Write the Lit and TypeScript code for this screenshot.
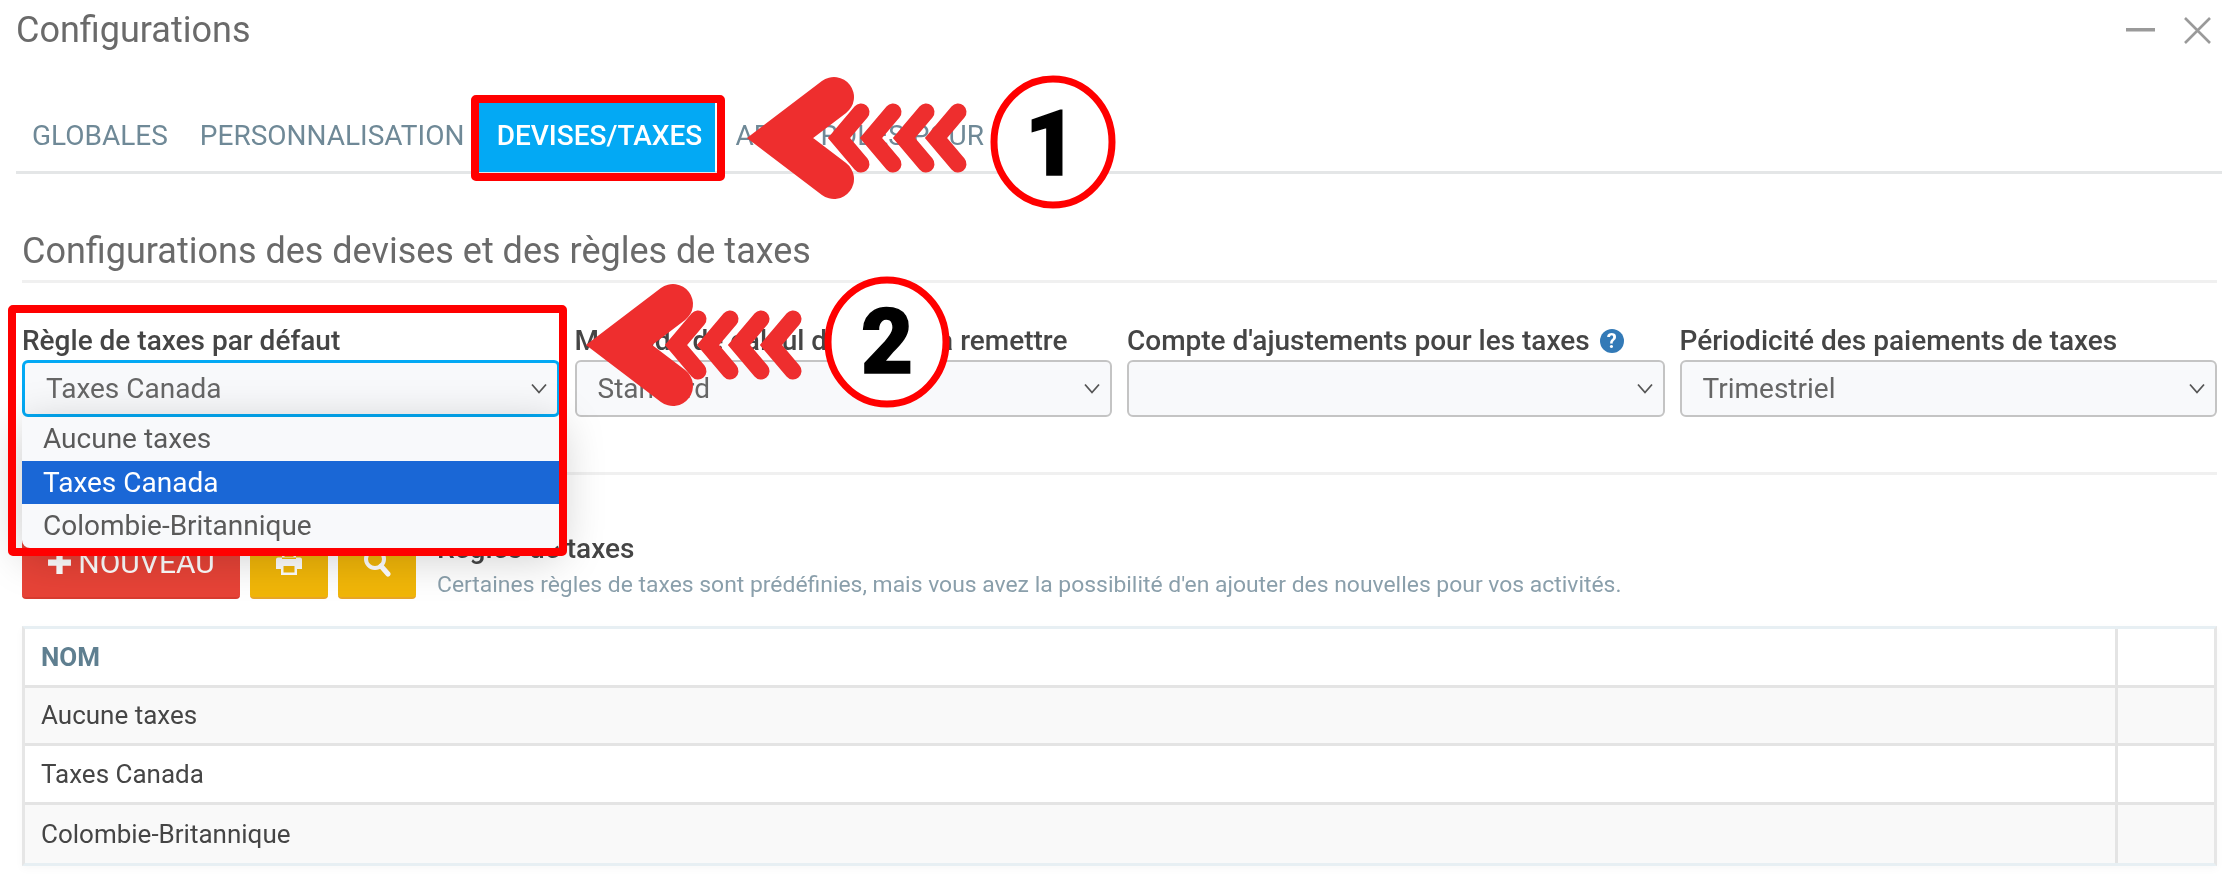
import { LitElement, html, css, svg } from "lit";
import { customElement } from "lit/decorators.js";

const chevron = html`<svg class="chev" viewBox="0 0 18 11" aria-hidden="true"><path d="M2 1.5 9 9.5 16 1.5" fill="none" stroke="#555" stroke-width="1.8"/></svg>`;

function arrow(tipY: number, big: number, smalls: number[]) {
  const bigV = big + 32;
  const small = smalls.map((t) => {
    const v = t + 11;
    return svg`<path class="soft" d="M${v + 22} ${tipY - 26} L${v} ${tipY} L${v + 22} ${tipY + 26}" fill="none" stroke="#ee2e2e" stroke-width="17" stroke-linecap="round" stroke-linejoin="miter"/>`;
  });
  return svg`${small}<path d="M${bigV + 54} ${tipY - 41} L${bigV} ${tipY} L${bigV + 54} ${tipY + 41}" fill="none" stroke="#ee2e2e" stroke-width="40" stroke-linecap="round" stroke-linejoin="miter"/>`;
}

@customElement("app-root")
export class AppRoot extends LitElement {
  static styles = css`
    :host {
      display: block;
      position: relative;
      width: 2225px;
      height: 876px;
      overflow: hidden;
      background: #fff;
      font-family: Roboto, "Liberation Sans", sans-serif;
      color: #444;
    }
    .page { filter: blur(0.45px); height: 876px; }
    .top {
      display: flex;
      align-items: center;
      justify-content: space-between;
      height: 60px;
      padding: 0 14px 0 16px;
    }
    .title { font-size: 36px; color: #6a6a6a; }
    .winbtns { display: flex; align-items: center; gap: 29px; }
    .winbtns svg { display: block; }
    .tabs {
      display: flex;
      align-items: stretch;
      height: 114px;
      margin: 0 3px 0 16px;
      padding-top: 43px;
      box-sizing: border-box;
      border-bottom: 3px solid #e4e6e7;
      font-size: 28px;
      color: #6f8997;
    }
    .tab { display: flex; align-items: center; padding: 0 16px 5px; height: 69px; box-sizing: border-box; white-space: nowrap; }
    .tab.active { background: #03a9f4; color: #fff; font-weight: 500; margin: 0 4px 0 0; padding: 0 0 5px 4px; width: 236px; justify-content: center; }
    .tab.pers { padding-right: 15px; }
    .content { padding: 0 8px 0 22px; }
    h2 {
      margin: 0;
      height: 109px;
      box-sizing: border-box;
      padding-top: 55px;
      font-size: 36px;
      font-weight: 400;
      line-height: 44px;
      color: #6a6a6a;
      border-bottom: 3px solid #f0f0f0;
    }
    .fields {
      display: grid;
      grid-template-columns: repeat(4, 1fr);
      gap: 15px;
      margin-top: 39px;
      height: 150px;
      position: relative;
    }
    .field { position: relative; }
    .lbl {
      font-size: 28px;
      font-weight: 500;
      color: #454545;
      line-height: 36px;
      height: 38px;
      white-space: nowrap;
      display: flex;
      align-items: center;
      gap: 10px;
    }
    .sel {
      height: 56.5px;
      box-sizing: border-box;
      border: 2.5px solid #c4c4c4;
      border-radius: 6px;
      background: #f8f9fb;
      font-size: 28px;
      color: #666;
      display: flex;
      align-items: center;
      justify-content: space-between;
      padding: 0 9px 0 21px;
    }
    .sel.focus { border: 3.5px solid #03a9f4; }
    .chev { width: 18px; height: 11px; flex: none; }
    .help {
      width: 24px; height: 24px; border-radius: 50%;
      background: #337ab7; color: #fff;
      font-size: 20px; font-weight: 700;
      display: inline-flex; align-items: center; justify-content: center;
    }
    .menu {
      position: absolute;
      left: 0;
      top: 95px;
      width: 538px;
      height: 131px;
      background: #f8f9fb;
      border-radius: 0 0 8px 8px;
      box-shadow: 0 8px 45px rgba(0,0,0,.22);
      font-size: 28px;
      color: #5a5a5a;
      z-index: 2;
    }
    .opt { height: 43.6px; display: flex; align-items: center; padding-left: 21px; }
    .opt.on { background: #1a67d6; color: #fff; }
    .bar { display: flex; gap: 10px; align-items: flex-end; height: 127px; border-top: 3px solid #f0f0f0; box-sizing: border-box; }
    .btn {
      height: 72px; box-sizing: border-box; border-radius: 4px;
      display: flex; align-items: center; justify-content: center;
      color: #fff;
    }
    .btn.red { width: 218px; background: #e74337; border-bottom: 2px solid #d83c30; font-size: 30px; gap: 6px; }
    .btn.yel { width: 78px; background: #f1b608; border-bottom: 2px solid #e8a628; }
    .desc { margin: 0 0 -4px 11px; display: flex; flex-direction: column; height: 72px; }
    .desc b { font-size: 28px; font-weight: 500; color: #454545; line-height: 36px; }
    .desc span { font-size: 22.9px; color: #8a9fab; line-height: 36px; white-space: nowrap; }
    .table {
      margin-top: 27px;
      display: grid;
      grid-template-columns: 1fr 99px;
      border: 3px solid #e6e6e6;
      border-top-color: #e7eff3;
      border-bottom-color: #e7eff3;
      box-shadow: 0 3px 8px rgba(0,0,0,.03);
      font-size: 26px;
      color: #454545;
    }
    .c { height: 58.6px; box-sizing: border-box; display: flex; align-items: center; padding-left: 16px; border-bottom: 3px solid #e4e4e4; }
    .c.e { border-left: 3px solid #e4e4e4; padding: 0; }
    .c.last { border-bottom: 0; }
    .c.alt { background: #f9f9f9; }
    .c.h { color: #5f7f90; font-weight: 700; }
    .overlay { position: absolute; inset: 0; width: 2225px; height: 876px; z-index: 5; pointer-events: none; }
    .soft { filter: blur(0.6px); }
    .num { font-family: Roboto, "Liberation Sans", sans-serif; font-weight: 900; font-size: 90px; fill: #000; stroke: #000; stroke-width: 1.5px; text-anchor: middle; }
  `;

  render() {
    return html`
      <div class="page">
        <div class="top">
          <div class="title">Configurations</div>
          <div class="winbtns">
            <svg width="29" height="4" viewBox="0 0 29 4"><rect width="29" height="3.5" fill="#9a9a9a"/></svg>
            <svg width="27" height="27" viewBox="0 0 27 27"><path d="M1 1 26 26M26 1 1 26" stroke="#9a9a9a" stroke-width="2.6" fill="none"/></svg>
          </div>
        </div>
        <div class="tabs">
          <div class="tab">GLOBALES</div>
          <div class="tab pers">PERSONNALISATION</div>
          <div class="tab active">DEVISES/TAXES</div>
          <div class="tab">APPR. RÔLES POUR</div>
        </div>
        <div class="content">
          <h2>Configurations des devises et des règles de taxes</h2>
          <div class="fields">
            <div class="field">
              <div class="lbl">Règle de taxes par défaut</div>
              <div class="sel focus"><span>Taxes Canada</span>${chevron}</div>
              <div class="menu">
                <div class="opt">Aucune taxes</div>
                <div class="opt on">Taxes Canada</div>
                <div class="opt">Colombie-Britannique</div>
              </div>
            </div>
            <div class="field">
              <div class="lbl">Méthode de calcul des taxes à remettre</div>
              <div class="sel"><span>Standard</span>${chevron}</div>
            </div>
            <div class="field">
              <div class="lbl">Compte d'ajustements pour les taxes <span class="help">?</span></div>
              <div class="sel"><span></span>${chevron}</div>
            </div>
            <div class="field">
              <div class="lbl">Périodicité des paiements de taxes</div>
              <div class="sel"><span>Trimestriel</span>${chevron}</div>
            </div>
          </div>
          <div class="bar">
            <div class="btn red">
              <svg width="25" height="25" viewBox="0 0 24 24"><path d="M9 1h6v8h8v6h-8v8H9v-8H1V9h8z" fill="#fff"/></svg>
              NOUVEAU
            </div>
            <div class="btn yel">
              <svg width="28" height="28" viewBox="0 0 28 28"><path d="M7 1h11l3 3v7H7zM9.5 3v7h9V5l-2-2zM1 11.5q0-2 2-2h22q2 0 2 2V21h-5v6H6v-6H1zM8.5 18v6.5h11V18z" fill="#fff" fill-rule="evenodd"/></svg>
            </div>
            <div class="btn yel">
              <svg width="28" height="30" viewBox="0 0 28 30"><circle cx="12" cy="12" r="9" fill="none" stroke="#fff" stroke-width="4"/><path d="M18 19 25 27" stroke="#fff" stroke-width="5" stroke-linecap="round"/></svg>
            </div>
            <div class="desc">
              <b>Règles de taxes</b>
              <span>Certaines règles de taxes sont prédéfinies, mais vous avez la possibilité d'en ajouter des nouvelles pour vos activités.</span>
            </div>
          </div>
          <div class="table">
            <div class="c h">NOM</div><div class="c e"></div>
            <div class="c alt">Aucune taxes</div><div class="c e alt"></div>
            <div class="c">Taxes Canada</div><div class="c e"></div>
            <div class="c alt last">Colombie-Britannique</div><div class="c e alt last"></div>
          </div>
        </div>
      </div>
      <svg class="overlay" viewBox="0 0 2225 876">
        <rect x="475" y="99" width="246" height="78" fill="none" stroke="#ff0000" stroke-width="8" rx="1"/>
        <rect x="12" y="309" width="551" height="243" fill="none" stroke="#ff0000" stroke-width="8" rx="1"/>
        ${arrow(138, 748, [828, 860, 893, 925])}
        ${arrow(345, 587, [665, 697, 728, 760])}
        <ellipse cx="1053" cy="142" rx="59" ry="63" fill="#fff" stroke="#ff0000" stroke-width="7"/>
        <text class="num" x="1051" y="175">1</text>
        <ellipse cx="887" cy="342" rx="59" ry="62" fill="#fff" stroke="#ff0000" stroke-width="7"/>
        <text class="num" x="887" y="373">2</text>
      </svg>
    `;
  }
}
